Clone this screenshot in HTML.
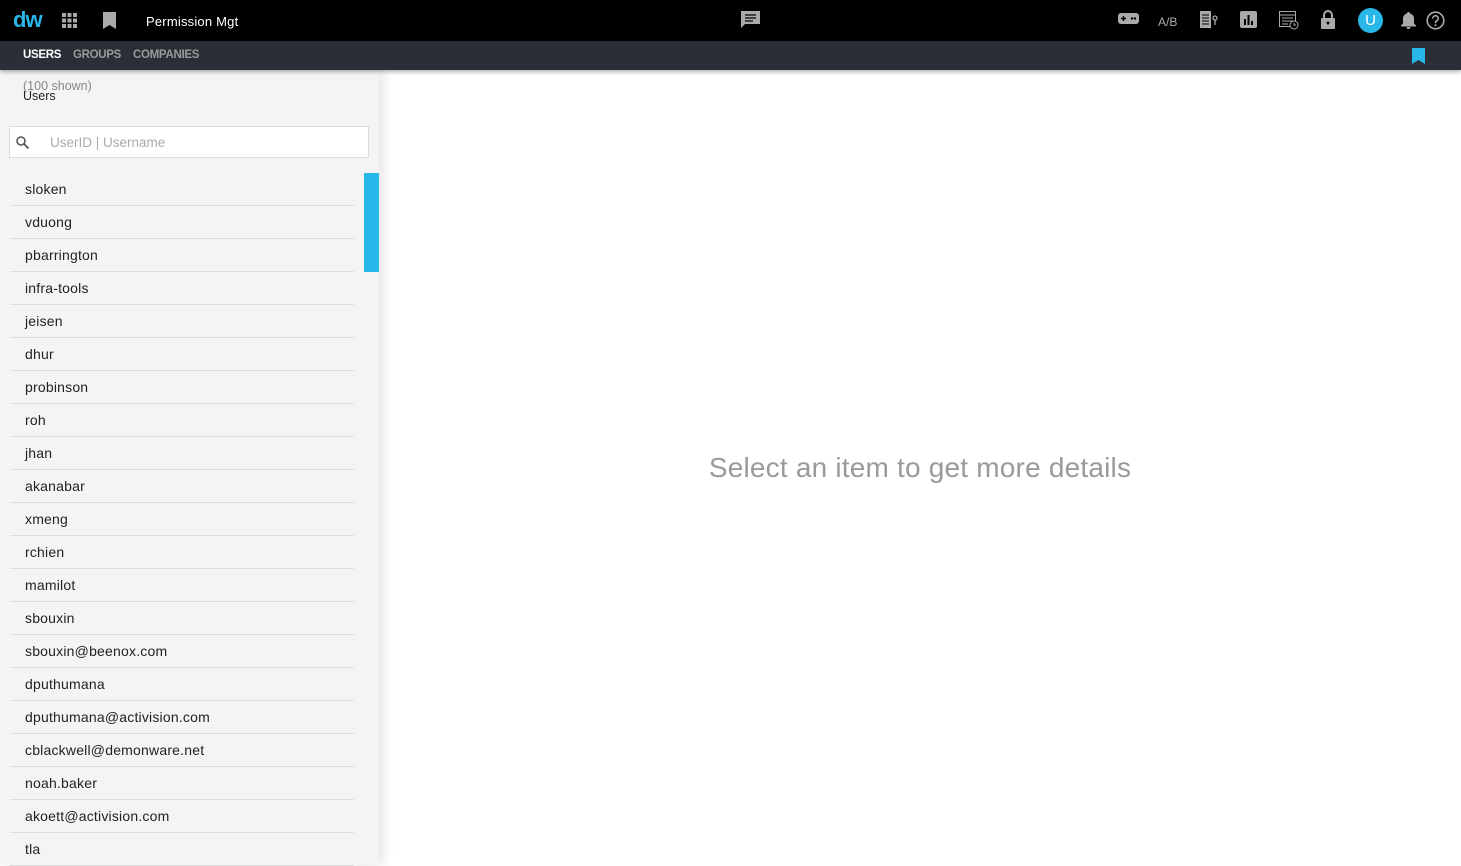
<!DOCTYPE html>
<html><head><style>
*{box-sizing:border-box;margin:0;padding:0}
body{width:1461px;height:865px;overflow:hidden;font-family:"Liberation Sans",Arial,sans-serif;background:#fff;position:relative}
.top{position:absolute;left:0;top:0;width:1461px;height:41px;background:#000}
.sub{position:absolute;left:0;top:41px;width:1461px;height:29px;background:#2a2e36;box-shadow:0 2px 4px rgba(0,0,0,.3);z-index:3}
.sub span{position:absolute;top:8px;font-size:11.5px;font-weight:bold;color:#9a9a9a;letter-spacing:-0.3px}
.side{position:absolute;left:0;top:70px;width:379px;height:795px;background:#f4f4f4;box-shadow:3px 0 12px rgba(0,0,0,.12);z-index:2}
.item{position:absolute;left:10px;width:344px;height:33px;border-bottom:1px solid #ddd;font-size:14px;color:#222;padding-left:15px;line-height:32px;letter-spacing:0.2px}
.ic{position:absolute;fill:#aaa}
</style></head><body>
<div class="top">
<div style="position:absolute;left:13px;top:7px;font-size:22px;font-weight:bold;color:#29b6e8;letter-spacing:-1px">dw</div>
<svg class="ic" style="left:62px;top:13px" width="15" height="15" viewBox="0 0 15 15"><g fill="#aaa"><rect x="0" y="0" width="4" height="4"/><rect x="5.5" y="0" width="4" height="4"/><rect x="11" y="0" width="4" height="4"/><rect x="0" y="5.5" width="4" height="4"/><rect x="5.5" y="5.5" width="4" height="4"/><rect x="11" y="5.5" width="4" height="4"/><rect x="0" y="11" width="4" height="4"/><rect x="5.5" y="11" width="4" height="4"/><rect x="11" y="11" width="4" height="4"/></g></svg>
<svg class="ic" style="left:103px;top:12px" width="13" height="17"><path d="M0 0h13v17l-6.5-4L0 17z" fill="#aaa"/></svg>
<div style="position:absolute;left:146px;top:14px;font-size:13px;color:#fff;letter-spacing:0.2px">Permission Mgt</div>
<svg class="ic" style="left:741px;top:11px" width="19" height="17"><path d="M0 0h19v13H4l-4 4z" fill="#aaa"/><path d="M4 4h11M4 7h11M4 10h8" stroke="#000" stroke-width="1.3"/></svg>
<svg style="position:absolute;left:1118px;top:13px" width="21" height="11"><rect width="21" height="11" rx="3" fill="#aaa"/><path d="M3 5.5h5M5.5 3v5" stroke="#000" stroke-width="1.5"/><circle cx="14" cy="5.5" r="1.2" fill="#000"/><circle cx="17" cy="5.5" r="1.2" fill="#000"/></svg>
<div style="position:absolute;left:1158px;top:15px;font-size:12px;color:#aaa">A/B</div>
<svg style="position:absolute;left:1200px;top:11px" width="18" height="18"><rect width="11" height="17" fill="#aaa"/><path d="M2 4h7M2 7h7M2 10h7M2 13h7" stroke="#000"/><circle cx="15" cy="7" r="2" fill="none" stroke="#aaa" stroke-width="1.3"/><path d="M15 9v5" stroke="#aaa" stroke-width="1.3"/></svg>
<svg style="position:absolute;left:1240px;top:11px" width="17" height="17"><rect width="17" height="17" rx="2" fill="#aaa"/><path d="M5 8v6M8.5 4v10M12 10v4" stroke="#000" stroke-width="2"/></svg>
<svg style="position:absolute;left:1279px;top:10px" width="20" height="20"><rect x=".5" y="1.5" width="16" height="15" fill="none" stroke="#aaa"/><path d="M.5 5h16M3 8h11M3 11h11M3 14h6" stroke="#aaa"/><circle cx="15" cy="15" r="4" fill="#000" stroke="#aaa"/><path d="M15 13v2h2" stroke="#aaa" fill="none"/></svg>
<svg style="position:absolute;left:1321px;top:10px" width="14" height="19"><path d="M3 8V5a4 4 0 0 1 8 0v3" fill="none" stroke="#aaa" stroke-width="2"/><rect y="8" width="14" height="11" rx="1" fill="#aaa"/><circle cx="7" cy="13" r="1.5" fill="#000"/></svg>
<div style="position:absolute;left:1358px;top:8px;width:25px;height:25px;border-radius:50%;background:#29b6e8;color:#fff;font-size:15px;text-align:center;line-height:25px">U</div>
<svg style="position:absolute;left:1401px;top:12px" width="15" height="17"><path d="M7.5 0a1.5 1.5 0 0 1 1.5 1.5 5 5 0 0 1 4 5v5l2 2v1H0v-1l2-2v-5a5 5 0 0 1 4-5A1.5 1.5 0 0 1 7.5 0zM5.5 15h4a2 2 0 0 1-4 0z" fill="#aaa"/></svg>
<svg style="position:absolute;left:1426px;top:11px" width="19" height="19"><circle cx="9.5" cy="9.5" r="8.3" fill="none" stroke="#aaa" stroke-width="1.6"/><path d="M6.8 7.5a2.7 2.7 0 1 1 3.8 2.4c-.8.4-1.1.9-1.1 1.8v.5" fill="none" stroke="#aaa" stroke-width="1.6"/><circle cx="9.5" cy="14.3" r="1" fill="#aaa"/></svg>
</div>
<div class="sub">
<span style="left:23px;color:#fff">USERS</span><span style="left:73px">GROUPS</span><span style="left:133px">COMPANIES</span>
<svg style="position:absolute;left:1412px;top:7px" width="13" height="16"><path d="M0 0h13v16l-6.5-4L0 16z" fill="#29b6e8"/></svg>
</div>
<div class="side">
<div style="position:absolute;left:23px;top:9px;font-size:12.5px;color:#888">(100 shown)</div>
<div style="position:absolute;left:23px;top:19px;font-size:12.5px;color:#222">Users</div>
<div style="position:absolute;left:9px;top:56px;width:360px;height:32px;background:#fff;border:1px solid #ddd">
<svg style="position:absolute;left:6px;top:9px" width="13" height="13"><circle cx="5" cy="5" r="4" fill="none" stroke="#555" stroke-width="1.6"/><path d="M8 8l4.5 4.5" stroke="#555" stroke-width="1.8"/></svg>
<div style="position:absolute;left:40px;top:8px;font-size:13.5px;color:#aaa">UserID | Username</div></div>
<div style="position:absolute;left:364px;top:103px;width:15px;height:99px;background:#29b6e8"></div>
<div class="item" style="top:103px">sloken</div>
<div class="item" style="top:136px">vduong</div>
<div class="item" style="top:169px">pbarrington</div>
<div class="item" style="top:202px">infra-tools</div>
<div class="item" style="top:235px">jeisen</div>
<div class="item" style="top:268px">dhur</div>
<div class="item" style="top:301px">probinson</div>
<div class="item" style="top:334px">roh</div>
<div class="item" style="top:367px">jhan</div>
<div class="item" style="top:400px">akanabar</div>
<div class="item" style="top:433px">xmeng</div>
<div class="item" style="top:466px">rchien</div>
<div class="item" style="top:499px">mamilot</div>
<div class="item" style="top:532px">sbouxin</div>
<div class="item" style="top:565px">sbouxin@beenox.com</div>
<div class="item" style="top:598px">dputhumana</div>
<div class="item" style="top:631px">dputhumana@activision.com</div>
<div class="item" style="top:664px">cblackwell@demonware.net</div>
<div class="item" style="top:697px">noah.baker</div>
<div class="item" style="top:730px">akoett@activision.com</div>
<div class="item" style="top:763px">tla</div>
</div>
<div style="position:absolute;left:379px;top:452px;width:1082px;text-align:center;font-size:28px;color:#9a9a9a;letter-spacing:0.2px">Select an item to get more details</div>
</body></html>
